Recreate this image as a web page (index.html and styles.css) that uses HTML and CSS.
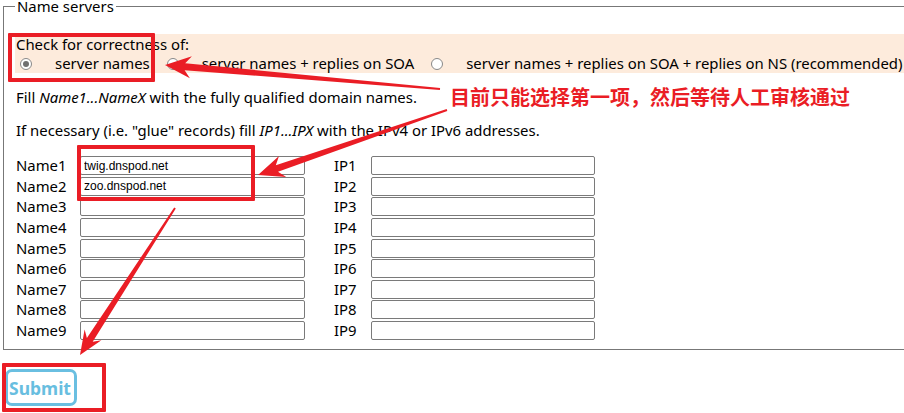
FILE: index.html
```html
<!DOCTYPE html>
<html lang="zh-CN">
<head>
<meta charset="utf-8">
<title>Name servers</title>
<link rel="stylesheet" href="styles.css">
</head>
<body>
<form class="page">
  <fieldset class="ns">
    <legend class="ns-legend">Name servers</legend>
    <div class="check">
      <div class="check-title">Check for correctness of:</div>
      <div class="radios">
        <span class="radio on"></span><span class="opt">server names</span>
        <span class="radio"></span><span class="opt">server names + replies on SOA</span>
        <span class="radio"></span><span class="opt">server names + replies on SOA + replies on NS (recommended)</span>
      </div>
    </div>
    <p class="info first">Fill <i>Name1...NameX</i> with the fully qualified domain names.</p>
    <p class="info">If necessary (i.e. "glue" records) fill <i>IP1...IPX</i> with the IPv4 or IPv6 addresses.</p>
    <div class="grid">
      <span class="lbl">Name1</span><input class="fld" type="text" value="twig.dnspod.net"><span class="lbl ip">IP1</span><input class="fld" type="text">
      <span class="lbl">Name2</span><input class="fld" type="text" value="zoo.dnspod.net"><span class="lbl ip">IP2</span><input class="fld" type="text">
      <span class="lbl">Name3</span><input class="fld" type="text"><span class="lbl ip">IP3</span><input class="fld" type="text">
      <span class="lbl">Name4</span><input class="fld" type="text"><span class="lbl ip">IP4</span><input class="fld" type="text">
      <span class="lbl">Name5</span><input class="fld" type="text"><span class="lbl ip">IP5</span><input class="fld" type="text">
      <span class="lbl">Name6</span><input class="fld" type="text"><span class="lbl ip">IP6</span><input class="fld" type="text">
      <span class="lbl">Name7</span><input class="fld" type="text"><span class="lbl ip">IP7</span><input class="fld" type="text">
      <span class="lbl">Name8</span><input class="fld" type="text"><span class="lbl ip">IP8</span><input class="fld" type="text">
      <span class="lbl">Name9</span><input class="fld" type="text"><span class="lbl ip">IP9</span><input class="fld" type="text">
    </div>
  </fieldset>
  <button class="submit" type="button">Submit</button>
</form>

<div class="note">目前只能选择第一项，然后等待人工审核通过</div>
<div class="mark mark-radio"></div>
<div class="mark mark-names"></div>
<div class="mark mark-submit"></div>
<svg class="arrows" width="904" height="413" viewBox="0 0 904 413">
  <polygon points="165,65 191.9,56.3 185.2,63.2 440.1,88 439.9,90 184.6,70.2 189.9,78.3"/>
  <polygon points="258,175 279,156.1 275.8,165.2 446.7,109.1 447.3,110.9 278,171.8 286.2,176.9"/>
  <polygon points="80,355 84.6,329.4 86.9,338 174.2,207.5 175.8,208.5 92.7,341.8 101.4,340.3"/>
</svg>
</body>
</html>
```

FILE: styles.css
```css
html, body {
  margin: 0;
  padding: 0;
}
body {
  width: 904px;
  height: 413px;
  overflow: hidden;
  position: relative;
  background: #fff;
  color: #000;
  font-family: "Noto Sans", "Noto Sans CJK SC", sans-serif;
  font-size: 14.9px;
}
.page {
  margin: 0;
  padding-top: 1px;
}
.ns {
  margin: 0 0 0 3px;
  padding: 0 0 9px 11px;
  border: 1px solid #777;
  width: 1100px;
  box-sizing: border-box;
  min-width: 0;
}
.ns-legend {
  padding: 0 2px;
  line-height: 10px;
}
.check {
  margin-top: 23px;
  padding-top: 1px;
  background: #fdebdc;
  line-height: 19px;
}
.check-title {
  padding-left: 1px;
}
.radios {
  display: flex;
  align-items: center;
  white-space: nowrap;
  height: 19px;
}
.radio {
  width: 12px;
  height: 12px;
  box-sizing: border-box;
  border: 1px solid #888;
  border-radius: 50%;
  background: #fff;
  margin: 0 23px 0 5px;
  display: flex;
  align-items: center;
  justify-content: center;
  flex: none;
}
.radio.on::after {
  content: "";
  width: 6px;
  height: 6px;
  border-radius: 50%;
  background: #707070;
}
.opt {
  margin-right: 12px;
}
.info {
  margin: 14px 0 0;
  line-height: 19px;
  padding-left: 1px;
}
.info.first {
  margin-top: 15px;
}
.grid {
  margin-top: 16px;
  display: grid;
  grid-template-columns: 65px 225px 66px 224px;
  grid-auto-rows: 19px;
  row-gap: 1.65px;
}
.lbl {
  line-height: 19px;
  padding-left: 1px;
}
.lbl.ip {
  padding-left: 29px;
}
.fld {
  box-sizing: border-box;
  width: 100%;
  height: 19px;
  margin: 0;
  padding: 0 3px;
  border: 1px solid #7a7a7a;
  border-radius: 2px;
  background: #fff;
  font-family: "Liberation Sans", Arial, sans-serif;
  font-size: 12px;
  color: #000;
}
.submit {
  display: block;
  margin: 19px 0 0 5px;
  width: 72px;
  height: 37px;
  padding: 0 0 0 1px;
  box-sizing: border-box;
  border: 3px solid #6abfe1;
  border-radius: 7px;
  background: #fff;
  color: #68bee0;
  font-family: "Noto Sans", sans-serif;
  font-weight: bold;
  font-size: 17.5px;
  text-align: left;
}
.note {
  position: absolute;
  left: 450px;
  top: 87px;
  font-family: "Noto Sans CJK SC", sans-serif;
  font-weight: bold;
  font-size: 20px;
  line-height: 20px;
  color: #ea1d25;
  white-space: nowrap;
}
.mark {
  position: absolute;
  border: 4px solid #ea1d25;
  border-radius: 1px;
  box-sizing: border-box;
}
.mark-radio {
  left: 8px;
  top: 33px;
  width: 147px;
  height: 49px;
}
.mark-names {
  left: 77px;
  top: 145px;
  width: 178px;
  height: 56px;
}
.mark-submit {
  left: 2px;
  top: 363px;
  width: 104px;
  height: 49px;
}
.arrows {
  position: absolute;
  left: 0;
  top: 0;
  pointer-events: none;
  fill: #ea1d25;
}
```
